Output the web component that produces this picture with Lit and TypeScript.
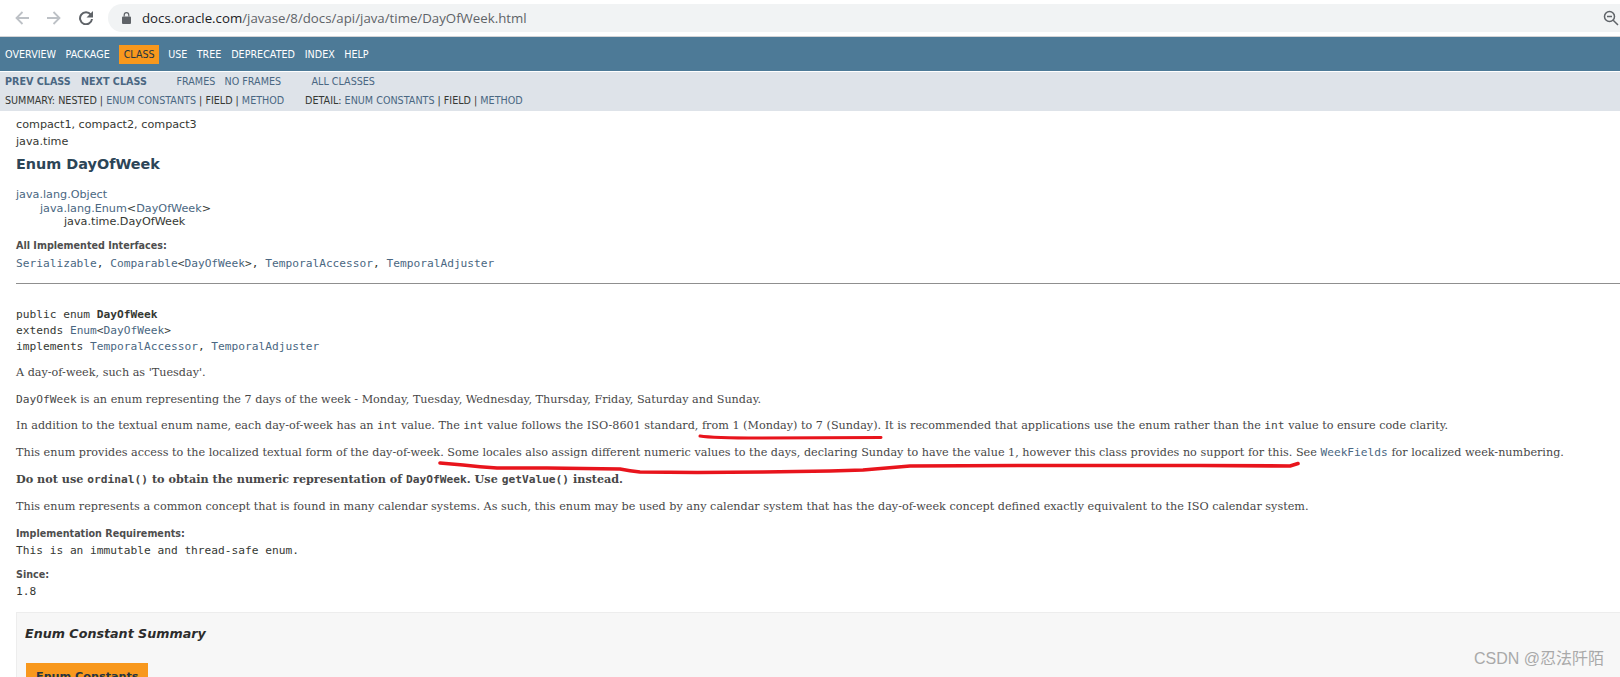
import { LitElement, html, css } from "lit";
import { customElement } from "lit/decorators.js";

@customElement("app-root")
export class AppRoot extends LitElement {
  static styles = css`
    :host { display: block; height: 677px; overflow: hidden; position: relative; background: #fff; color: #353833; font-family: "DejaVu Sans", sans-serif; font-size: 11.2px; }
    a { color: #4a6782; text-decoration: none; }
    .chrome { height: 36px; display: flex; align-items: center; border-bottom: 1px solid #d3d4d6; }
    .chrome svg { display: block; flex: none; }
    .navicons { display: flex; gap: 18px; padding-left: 15px; width: 108px; flex: none; box-sizing: border-box; }
    .omni { flex: 1; height: 28px; border-radius: 14px 0 0 14px; background: #f1f3f4; display: flex; align-items: center; padding-left: 14px; gap: 11px; font-family: "Open Sans", sans-serif; font-size: 13.26px; color: #5f6368; }
    .omni b { font-weight: 400; color: #202124; }
    .url { flex: 1; white-space: nowrap; }
    .zoomi { margin-right: 1px; }
    .topnav { height: 34px; background: #4d7a97; display: flex; align-items: center; padding-left: 5px; color: #fff; font-size: 9.6px; }
    .topnav span { margin-right: 9.400px; }
    .topnav .cur { background: #f8981d; color: #253441; width: 40px; height: 19px; display: flex; align-items: center; justify-content: center; margin-right: 9px; }
    .topnav .wide { margin-right: 9.800px; }
    .subnav { height: 39px; background: #dee3e9; font-size: 9.6px; padding-left: 5px; color: #353833; box-sizing: border-box; }
    .row { display: flex; height: 19px; align-items: center; white-space: pre; }
    .row1 { margin-top: 1px; }
    .row1 b { color: #4a6782; width: 76px; }
    .row1 .f1 { margin-left: 19.500px; width: 48px; }
    .row1 .f2 { width: 87px; }
    .row2 .l { width: 300px; }
    .content { padding-left: 16px; }
    .line { line-height: 14px; white-space: nowrap; }
    .compact { margin-top: 7px; }
    .pkg { margin-top: 3px; }
    h2 { margin: 6px 0 0; font-size: 14.4px; line-height: 18px; color: #2c4557; font-weight: 700; }
    .inh { margin-top: 15px; line-height: 13.5px; }
    .inh div:nth-child(2) { padding-left: 24px; }
    .inh div:nth-child(3) { padding-left: 48px; }
    .lbl { font-size: 9.6px; font-weight: 700; color: #4e4e4e; }
    .impl { margin-top: 10.500px; }
    .mono { font-family: "DejaVu Sans Mono", monospace; font-size: 11.2px; }
    .ifs { margin-top: 4px; }
    hr { margin: 12px 0 0; height: 1px; background: #8f8f8f; border: 0; }
    .sig { margin-top: 22.500px; line-height: 16px; }
    .sig div { height: 16px; }
    .doc { font-family: "DejaVu Serif", serif; font-size: 11.21px; line-height: 14px; white-space: nowrap; color: #474747; }
    .doc code { font-family: "DejaVu Sans Mono", monospace; }
    .first { margin-top: 11.500px; }
    .m12 { margin-top: 12px; } .m13 { margin-top: 13px; }
    .m3 { margin-top: 3px; } .m10 { margin-top: 10px; }
    .summary { margin-top: 13px; background: #f7f7f7; border: 1px solid #ededed; border-right: 0; height: 80px; box-sizing: border-box; padding-left: 8px; }
    h3 { margin: 12px 0 0; font-size: 12.7px; line-height: 18px; font-style: italic; font-weight: 700; color: #2c2c2c; }
    .tab { margin: 20px 0 0 1px; width: 122px; height: 30px; background: #f8981d; color: #253441; font-weight: 700; font-size: 11.2px; padding: 6px 0 0 10px; box-sizing: border-box; line-height: 16px; }
    .marks { position: absolute; left: 0; top: 0; pointer-events: none; }
    .wm { position: absolute; right: 16px; top: 649px; font-family: "Liberation Sans", "Noto Sans CJK SC", sans-serif; font-size: 16px; line-height: 20px; color: #a9a9a9; }
  `;

  render() {
    return html`
      <div class="chrome">
        <div class="navicons">
          <svg width="14" height="14" viewBox="0 0 14 14" fill="none" stroke="#bdc1c6" stroke-width="1.800"><path d="M14 7H1.500M7.500 1L1.500 7l6 6"/></svg>
          <svg width="14" height="14" viewBox="0 0 14 14" fill="none" stroke="#bdc1c6" stroke-width="1.800"><path d="M0 7h12.500M6.500 1l6 6-6 6"/></svg>
          <svg width="14" height="14" viewBox="0 0 14 14" fill="none" stroke="#5f6368" stroke-width="2"><path d="M11.800 3.600A6 6 0 1 0 13 8"/><path d="M14 0v6.500H7.500z" fill="#5f6368" stroke="none"/></svg>
        </div>
        <div class="omni">
          <svg width="9" height="12" viewBox="0 0 9 12"><path d="M1 4.500h7a1 1 0 0 1 1 1V11a1 1 0 0 1-1 1H1a1 1 0 0 1-1-1V5.500a1 1 0 0 1 1-1z" fill="#5f6368"/><path d="M2.200 4.500V3a2.300 2.300 0 0 1 4.600 0v1.500" fill="none" stroke="#5f6368" stroke-width="1.200"/></svg>
          <div class="url"><b>docs.oracle.com</b>/javase/8/docs/api/java/time/DayOfWeek.html</div>
          <svg class="zoomi" width="16" height="16" viewBox="0 0 16 16" fill="none" stroke="#5f6368" stroke-width="1.500"><circle cx="6.500" cy="6.500" r="5"/><path d="M4 6.500h5M10.200 10.200L15 15"/></svg>
        </div>
      </div>
      <div class="topnav">
        <span>OVERVIEW</span><span>PACKAGE</span><div class="cur">CLASS</div><span>USE</span><span class="wide">TREE</span><span class="wide">DEPRECATED</span><span>INDEX</span><span>HELP</span>
      </div>
      <div class="subnav">
        <div class="row row1"><b>PREV CLASS</b><b>NEXT CLASS</b><a class="f1">FRAMES</a><a class="f2">NO FRAMES</a><a>ALL CLASSES</a></div>
        <div class="row row2"><div class="l">SUMMARY: NESTED | <a>ENUM CONSTANTS</a> | FIELD | <a>METHOD</a></div><div>DETAIL: <a>ENUM CONSTANTS</a> | FIELD | <a>METHOD</a></div></div>
      </div>
      <div class="content">
        <div class="line compact">compact1, compact2, compact3</div>
        <div class="line pkg">java.time</div>
        <h2>Enum DayOfWeek</h2>
        <div class="inh">
          <div><a>java.lang.Object</a></div>
          <div><a>java.lang.Enum</a>&lt;<a>DayOfWeek</a>&gt;</div>
          <div>java.time.DayOfWeek</div>
        </div>
        <div class="line lbl impl">All Implemented Interfaces:</div>
        <div class="line mono ifs"><a>Serializable</a>, <a>Comparable</a>&lt;<a>DayOfWeek</a>&gt;, <a>TemporalAccessor</a>, <a>TemporalAdjuster</a></div>
        <hr />
        <div class="mono sig">
          <div>public enum <b>DayOfWeek</b></div>
          <div>extends <a>Enum</a>&lt;<a>DayOfWeek</a>&gt;</div>
          <div>implements <a>TemporalAccessor</a>, <a>TemporalAdjuster</a></div>
        </div>
        <div class="doc first">A day-of-week, such as 'Tuesday'.</div>
        <div class="doc m13"><code>DayOfWeek</code> is an enum representing the 7 days of the week - Monday, Tuesday, Wednesday, Thursday, Friday, Saturday and Sunday.</div>
        <div class="doc m12">In addition to the textual enum name, each day-of-week has an <code>int</code> value. The <code>int</code> value follows the ISO-8601 standard, from 1 (Monday) to 7 (Sunday). It is recommended that applications use the enum rather than the <code>int</code> value to ensure code clarity.</div>
        <div class="doc m13">This enum provides access to the localized textual form of the day-of-week. Some locales also assign different numeric values to the days, declaring Sunday to have the value 1, however this class provides no support for this. See <a><code>WeekFields</code></a> for localized week-numbering.</div>
        <div class="doc m12"><b>Do not use <code>ordinal()</code> to obtain the numeric representation of <code>DayOfWeek</code>. Use <code>getValue()</code> instead.</b></div>
        <div class="doc m13">This enum represents a common concept that is found in many calendar systems. As such, this enum may be used by any calendar system that has the day-of-week concept defined exactly equivalent to the ISO calendar system.</div>
        <div class="line lbl m13">Implementation Requirements:</div>
        <div class="line mono m3">This is an immutable and thread-safe enum.</div>
        <div class="line lbl m10">Since:</div>
        <div class="line mono m3">1.8</div>
        <div class="summary">
          <h3>Enum Constant Summary</h3>
          <div class="tab">Enum Constants</div>
        </div>
      </div>
      <svg class="marks" width="1620" height="677" fill="none" stroke="#e8141c" stroke-linecap="round" stroke-linejoin="round">
        <path stroke-width="3" d="M700 436Q712 438 760 438T881 437.500"/>
        <path stroke-width="3.600" d="M440 463L463 465Q480 467 497 468L547 468L620 469Q630 471 640 472L697 472.500L763 472L830 471L863 470L910 466L1030 465.500L1200 465.500L1290 466L1298 463.500"/>
      </svg>
      <div class="wm">CSDN @忍法阡陌</div>
    `;
  }
}
